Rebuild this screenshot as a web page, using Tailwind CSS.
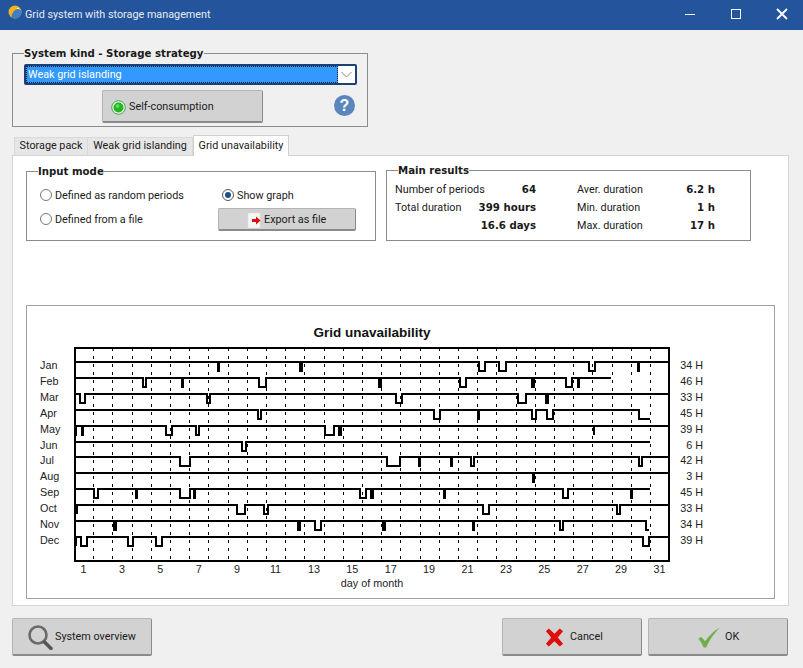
<!DOCTYPE html>
<html lang="en">
<head>
<meta charset="UTF-8">
<title>Grid system with storage management</title>
<script src="https://cdn.jsdelivr.net/npm/@tailwindcss/browser@4"></script>
</head>
<body class="bg-[#f0f0f0] text-[#1a1a1a] font-['Roboto',sans-serif] text-[10.800px] overflow-hidden">
<div class="w-[803px] h-[668px] flex flex-col">

  <!-- Title bar -->
  <div class="h-[30px] bg-[#24559c] flex items-center text-white/90 shrink-0">
    <svg class="ml-[8px] mt-[-6px]" width="14" height="14" viewBox="0 0 14 14"><circle cx="7" cy="7" r="6.500" fill="#f2b31e"/><path d="M13.500 7A6.500 6.500 0 0 1 3.500 12.500C3.500 8 6.500 4.500 10.500 3.500 12.500 4.500 13.500 6 13.500 7Z" fill="#3f7fc0"/><path d="M8 3.500C9.500 2.500 11 3 12 4.500 10.500 4 9 4 8 3.500Z" fill="#eef4fa"/></svg>
    <span class="ml-[3px] text-[10.800px] text-[#e6ecf5]">Grid system with storage management</span>
    <div class="ml-auto flex items-center mt-[-2px]">
      <svg width="12" height="12" viewBox="0 0 12 12" class="mr-[34px]"><path d="M1 6.500H11" stroke="#f2f5fa" stroke-width="1"/></svg>
      <svg width="12" height="12" viewBox="0 0 12 12" class="mr-[34px]"><rect x="1.500" y="1.500" width="9" height="9" fill="none" stroke="#f2f5fa"/></svg>
      <svg width="12" height="12" viewBox="0 0 12 12" class="mr-[15px]"><path d="M1 1L11 11M11 1L1 11" stroke="#fff" stroke-width="1.800"/></svg>
    </div>
  </div>

  <!-- System kind group -->
  <div class="relative ml-[12px] mt-[23px] w-[356px] h-[74px] border border-[#8c8c8c] shrink-0 px-[11px] pt-[10px]">
    <span class="absolute left-[11px] top-[-8px] bg-[#f0f0f0] font-['DejaVu_Sans',sans-serif] font-bold text-[10.200px] leading-[16px]">System kind - Storage strategy</span>
    <div class="h-[21px] w-[333px] border-2 border-[#1b3f78] rounded-[2px] bg-white flex">
      <div class="flex-1 bg-[#3399ff] border border-dotted border-[#123] text-white leading-[15px] pl-[1px]">Weak grid islanding</div>
      <div class="w-[17px] flex items-center justify-center"><svg width="11" height="7" viewBox="0 0 11 7"><path d="M.5 1L5.500 6 10.500 1" fill="none" stroke="#8a8a8a"/></svg></div>
    </div>
    <div class="flex items-center mt-[5px]">
      <div class="ml-[78px] w-[161px] h-[33px] pt-[2px] bg-[#d2d2d2] border border-[#b4b4b4] border-r-[#8a8a8a] border-b-2 border-b-[#8a8a8a] rounded-[2px] flex items-center pl-[8px] gap-[3px]">
        <svg width="15" height="15" viewBox="0 0 15 15"><circle cx="7.500" cy="7.500" r="6.800" fill="#e8f5e0" stroke="#45a545"/><circle cx="7.500" cy="7.500" r="5" fill="#22b422"/><circle cx="6.500" cy="6" r="2" fill="#5fd85f"/></svg>
        <span>Self-consumption</span>
      </div>
      <div class="ml-[71px] mt-[-2px] w-[21px] h-[21px] rounded-full bg-[#5b86bd] flex items-center justify-center text-white font-bold text-[16px] leading-none font-['Liberation_Sans',sans-serif]">?</div>
    </div>
  </div>

  <!-- Tabs -->
  <div class="ml-[14px] mt-[7px] flex items-end h-[21px] shrink-0 relative z-10 whitespace-nowrap">
    <div class="h-[18px] w-[74px] bg-[#e6e6e6] border border-[#d9d9d9] border-b-0 flex items-center justify-center">Storage pack</div>
    <div class="h-[18px] w-[105px] bg-[#e6e6e6] border border-[#d9d9d9] border-b-0 border-l-0 flex items-center justify-center">Weak grid islanding</div>
    <div class="h-[21px] w-[96px] bg-white border border-[#d0d0d0] border-b-0 flex items-center justify-center mb-[-1px]">Grid unavailability</div>
  </div>

  <!-- Tab panel -->
  <div class="ml-[12px] w-[777px] h-[451px] bg-white border border-[#d4d4d4] shrink-0 px-[13px] flex flex-col">
    <div class="flex mt-[14px] gap-[10px] h-[71px] shrink-0">
      <div class="relative w-[350px] h-[70px] mt-[1px] border border-[#8c8c8c]">
        <span class="absolute left-[11px] top-[-8px] bg-white font-['DejaVu_Sans',sans-serif] font-bold text-[10.200px] leading-[16px]">Input mode</span>
        <div class="grid grid-cols-[182px_1fr] pl-[13px] pt-[11px]">
          <div class="flex items-center gap-[3px] h-[24px]"><span class="w-[12px] h-[12px] rounded-full border border-[#777] bg-white"></span><span class="pt-[2px]">Defined as random periods</span></div>
          <div class="flex items-center gap-[3px] h-[24px]"><span class="w-[12px] h-[12px] rounded-full border border-[#555] bg-white flex items-center justify-center"><span class="w-[6px] h-[6px] rounded-full bg-[#1b4f8f]"></span></span><span class="pt-[2px]">Show graph</span></div>
          <div class="flex items-center gap-[3px] h-[24px]"><span class="w-[12px] h-[12px] rounded-full border border-[#777] bg-white"></span><span class="pt-[2px]">Defined from a file</span></div>
          <div class="h-[23px] w-[138px] ml-[-4px] mt-[1px] pt-[2px] bg-[#d2d2d2] border border-[#b4b4b4] border-r-[#8a8a8a] border-b-2 border-b-[#8a8a8a] rounded-[2px] flex items-center pl-[28px] gap-[3px]">
            <svg width="14" height="15" viewBox="0 0 14 15"><path d="M1 0H13V15H1Z" fill="#f6f6f6" stroke="#ddd" stroke-width=".5"/><path d="M5 6H9V3.500L13.500 7.500 9 11.500V9H5Z" fill="#d81010"/></svg>
            <span>Export as file</span>
          </div>
        </div>
      </div>
      <div class="relative w-[365px] h-[71px] border border-[#8c8c8c]">
        <span class="absolute left-[11px] top-[-8px] bg-white font-['DejaVu_Sans',sans-serif] font-bold text-[10.200px] leading-[16px]">Main results</span>
        <div class="grid grid-cols-[80px_61px_41px_72px_66px] ml-[8px] mt-[10px] auto-rows-[18px] items-center whitespace-nowrap">
          <span>Number of periods</span><b class="text-right font-['DejaVu_Sans',sans-serif] text-[10.200px]">64</b><span class="col-start-4">Aver. duration</span><b class="text-right font-['DejaVu_Sans',sans-serif] text-[10.200px]">6.2 h</b>
          <span>Total duration</span><b class="text-right font-['DejaVu_Sans',sans-serif] text-[10.200px]">399 hours</b><span class="col-start-4">Min. duration</span><b class="text-right font-['DejaVu_Sans',sans-serif] text-[10.200px]">1 h</b>
          <b class="col-start-2 text-right font-['DejaVu_Sans',sans-serif] text-[10.200px]">16.6 days</b><span class="col-start-4">Max. duration</span><b class="text-right font-['DejaVu_Sans',sans-serif] text-[10.200px]">17 h</b>
        </div>
      </div>
    </div>

    <!-- Chart -->
    <div class="mt-[64px] w-[749px] h-[294px] border border-[#a0a0a0] bg-white shrink-0">
      <svg id="chart" width="747" height="292" viewBox="27 306 747 292" font-family="'Liberation Sans',sans-serif" font-size="10.800" fill="#222">
        <text x="372" y="337" text-anchor="middle" font-size="13.500" font-weight="bold" fill="#111">Grid unavailability</text>
        <g id="grid"></g>
        <g id="traces" fill="none" stroke="#000" stroke-width="2" stroke-linejoin="miter"></g>
        <rect x="75" y="348" width="594" height="213" fill="none" stroke="#000" stroke-width="2"/>
        <g id="labels"></g>
        <text x="372" y="587" text-anchor="middle">day of month</text>
      </svg>
    </div>
  </div>

  <!-- Bottom buttons -->
  <div class="flex mt-[12px] pl-[12px] pr-[15px] shrink-0">
    <div class="w-[140px] h-[38px] pt-[2px] bg-[#d2d2d2] border border-[#b4b4b4] border-r-[#8a8a8a] border-b-2 border-b-[#8a8a8a] rounded-[2px] flex items-center pl-[14px] gap-[2px]">
      <svg width="26" height="25" viewBox="0 0 26 25"><circle cx="11" cy="10" r="8.500" fill="none" stroke="#6a6a6a" stroke-width="2.600"/><path d="M17.500 17L24 23.500" stroke="#555" stroke-width="3.500" stroke-linecap="round"/></svg>
      <span>System overview</span>
    </div>
    <div class="ml-auto w-[140px] h-[38px] pt-[2px] bg-[#d2d2d2] border border-[#b4b4b4] border-r-[#8a8a8a] border-b-2 border-b-[#8a8a8a] rounded-[2px] flex items-center pl-[42px] gap-[6px]">
      <svg width="19" height="19" viewBox="0 0 20 20"><path d="M1 3.500L4 .5 10 6 15.500.5 19 3.500 13.500 10 19 16.500 15.500 19.500 10 14 4 19.500 1 16.500 6.500 10Z" fill="#e00d0d"/></svg>
      <span>Cancel</span>
    </div>
    <div class="ml-[6px] w-[140px] h-[38px] pt-[2px] bg-[#d2d2d2] border border-[#b4b4b4] border-r-[#8a8a8a] border-b-2 border-b-[#8a8a8a] rounded-[2px] flex items-center pl-[48px] gap-[4px]">
      <svg width="24" height="21" viewBox="0 0 24 22"><path d="M1 12L4 10.500 8 15C12 9 17 4 23.500 .5 17 7 12 14 9 21.500H6.500C5 18 3 15 1 12Z" fill="#6fae4a"/></svg>
      <span>OK</span>
    </div>
  </div>
</div>

<script>
  // each row: label, hours, end x, then dips as [x1, x2] in chart pixels (outer edges)
  const months = [
    ['Jan', '34 H', 669, [[217,220],[299,303],[478,486],[498,507],[588,596],[637,640]]],
    ['Feb', '46 H', 611, [[142,147],[181,184],[258,267],[378,382],[459,467],[531,535],[565,573],[577,580]]],
    ['Mar', '33 H', 669, [[79,86],[206,211],[395,403],[517,527],[545,549]]],
    ['Apr', '45 H', 651, [[257,262],[433,441],[477,480],[531,537],[546,554],[638,651]]],
    ['May', '39 H', 669, [[74,77],[81,84],[165,173],[195,200],[324,335],[338,342],[593,595]]],
    ['Jun', '6 H', 650, [[241,247]]],
    ['Jul', '42 H', 669, [[179,191],[386,401],[418,421],[450,453],[470,475],[638,643]]],
    ['Aug', '3 H', 669, [[532,535]]],
    ['Sep', '45 H', 650, [[93,99],[135,138],[179,191],[193,196],[359,367],[370,374],[443,446],[562,569],[630,633]]],
    ['Oct', '33 H', 669, [[76,78],[236,246],[263,269],[482,490],[616,621]]],
    ['Nov', '34 H', 650, [[113,117],[297,301],[314,322],[382,386],[472,475],[559,564],[645,650]]],
    ['Dec', '39 H', 669, [[75,77],[80,88],[127,134],[155,163],[642,650]]]
  ];
  const NS = 'http://www.w3.org/2000/svg';
  function add(parent, tag, attrs, text) {
    const el = document.createElementNS(NS, tag);
    for (const k in attrs) el.setAttribute(k, attrs[k]);
    if (text) el.textContent = text;
    document.getElementById(parent).appendChild(el);
  }

  for (let d = 1; d <= 30; d++) {
    const x = Math.round(74 + 19.2 * d) + 0.5;
    add('grid', 'path', { d: `M${x} 348V561`, stroke: '#000', 'stroke-dasharray': '3 5', fill: 'none' });
  }
  for (let d = 1; d <= 31; d += 2) {
    add('labels', 'text', { x: 83.5 + 19.2 * (d - 1), y: 573, 'text-anchor': 'middle' }, String(d));
  }

  months.forEach((m, i) => {
    const y = Math.round(362 + 15.9 * i);
    let pts = `M75 ${y}`;
    let endsLow = false;
    m[3].forEach(([a, b]) => {
      // inset by half the stroke so the drawn dip matches the outer edges
      const l = a + 1, r = Math.max(b - 1, a + 1);
      pts += `L${l} ${y}L${l} ${y + 9}L${r} ${y + 9}`;
      if (b === m[2]) endsLow = true; // trace stops at the bottom of its last dip
      else pts += `L${r} ${y}`;
    });
    if (!endsLow) pts += `L${m[2]} ${y}`;
    add('traces', 'path', { d: pts });
    add('labels', 'text', { x: 40, y: y + 7 }, m[0]);
    add('labels', 'text', { x: 703, y: y + 7, 'text-anchor': 'end' }, m[1]);
  });
</script>
</body>
</html>
